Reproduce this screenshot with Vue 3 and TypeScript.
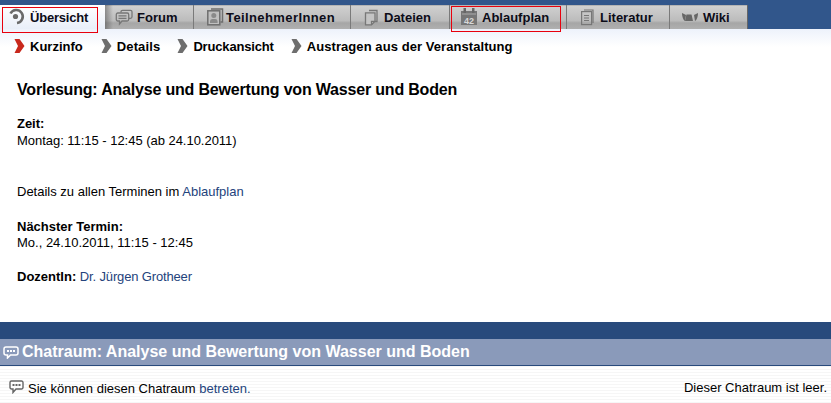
<script setup lang="ts">
interface Tab { label: string; icon: string; width: number; active?: boolean }
const tabs: Tab[] = [
  { label: 'Übersicht', icon: 'overview', width: 105, active: true },
  { label: 'Forum', icon: 'forum', width: 89 },
  { label: 'TeilnehmerInnen', icon: 'people', width: 157 },
  { label: 'Dateien', icon: 'files', width: 99 },
  { label: 'Ablaufplan', icon: 'plan', width: 117 },
  { label: 'Literatur', icon: 'lit', width: 103 },
  { label: 'Wiki', icon: 'wiki', width: 78 },
]
const subs = ['Kurzinfo', 'Details', 'Druckansicht', 'Austragen aus der Veranstaltung']
</script>

<template>
  <div class="page">
    <div class="topbar">
      <div class="tabs">
        <div v-for="t in tabs" :key="t.label" class="tab" :class="{ active: t.active }" :style="{ width: t.width + 'px' }">
          <svg class="ico" width="18" height="18" viewBox="0 0 18 18">
            <g v-if="t.icon === 'overview'">
              <path d="M2.500 5.500A6.500 6.500 0 1 1 9 15" fill="none" stroke="#6a6a6a" stroke-width="2.600" />
              <circle cx="7.500" cy="8.500" r="2.600" fill="#6a6a6a" />
            </g>
            <g v-else-if="t.icon === 'forum'" fill="none" stroke="#777" stroke-width="1.300">
              <path d="M6 4.500V3.800a1.500 1.500 0 0 1 1.500-1.500h8A1.500 1.500 0 0 1 17 3.800v5a1.500 1.500 0 0 1-1.500 1.500H14" />
              <path d="M2.800 5h9.400a1.500 1.500 0 0 1 1.500 1.500v5a1.500 1.500 0 0 1-1.500 1.500H7l-2.500 3v-3H2.800a1.500 1.500 0 0 1-1.500-1.500v-5A1.500 1.500 0 0 1 2.800 5z" />
              <path d="M3.500 7.800h8M3.500 10.300h8" />
            </g>
            <g v-else-if="t.icon === 'people'" fill="none" stroke="#6e6e6e" stroke-width="1.500">
              <path d="M7 1h11.500v13h-2" />
              <rect x="3.800" y="2.800" width="12" height="14" fill="#c0c0c0" />
              <circle cx="9.800" cy="7.500" r="2.500" fill="#8a8a8a" stroke="none" />
              <path d="M6 15v-2a2.500 2.500 0 0 1 2.500-2h2.600a2.500 2.500 0 0 1 2.500 2v2z" fill="#8a8a8a" stroke="none" />
            </g>
            <g v-else-if="t.icon === 'files'" fill="none" stroke="#777" stroke-width="1.300">
              <path d="M8 2.500h8v11h-2" />
              <path d="M4.500 4.800h9.500v8.500l-3.500 3.500H4.500z" fill="#c4c4c4" />
              <path d="M10.500 16.800v-3.500h3.500" />
            </g>
            <g v-else-if="t.icon === 'plan'">
              <rect x="1" y="3" width="16" height="14" fill="#767676" />
              <rect x="3.500" y="0" width="2.500" height="5" fill="#666" />
              <rect x="12" y="0" width="2.500" height="5" fill="#666" />
              <rect x="2" y="5.500" width="14" height="1" fill="#aaa" />
              <text x="9" y="15.500" text-anchor="middle" class="cal">42</text>
            </g>
            <g v-else-if="t.icon === 'lit'" fill="none" stroke="#777" stroke-width="1.200">
              <rect x="4.600" y="3.600" width="10" height="13" />
              <path d="M7 2h9v13" />
              <path d="M7 7.500h5M7 10h5M7 12.500h5" />
            </g>
            <g v-else fill="#666">
              <path d="M6.500 6.500h5L13 13H5z" />
              <path d="M2 5l4 2-1 6C3 12 2 8 2 5zM18 5l-4 2 1 6c2-1 3-5 3-8z" />
            </g>
          </svg>
          <span class="tab-label">{{ t.label }}</span>
        </div>
      </div>
    </div>
    <div class="mark mark-a"></div>
    <div class="mark mark-b"></div>

    <div class="subnav">
      <span v-for="(s, i) in subs" :key="s" class="sub">
        <svg width="11" height="14" viewBox="0 0 11 14"><path d="M0.500 0H5.500L10.500 7 5.500 14H0.500L4 7z" :fill="i === 0 ? '#c8281c' : '#6e6e6e'" /></svg>
        {{ s }}
      </span>
    </div>

    <main class="content">
      <h1>Vorlesung: Analyse und Bewertung von Wasser und Boden</h1>
      <p class="zeit"><b>Zeit:</b><br />Montag: 11:15 - 12:45 (ab 24.10.2011)</p>
      <p class="details">Details zu allen Terminen im <a>Ablaufplan</a></p>
      <p class="next"><b>Nächster Termin:</b><br />Mo., 24.10.2011, 11:15 - 12:45</p>
      <p class="doz"><b>DozentIn:</b> <a>Dr. Jürgen Grotheer</a></p>
    </main>

    <div class="band"></div>
    <div class="chat-head">
      <svg width="16" height="14" viewBox="0 0 16 14"><path d="M3 2h10a2 2 0 0 1 2 2v4a2 2 0 0 1-2 2H7.500L4.500 13v-3H3a2 2 0 0 1-2-2V4a2 2 0 0 1 2-2z" fill="none" stroke="#fff" stroke-width="1.500" /><path d="M4 6h8" stroke="#fff" stroke-width="2" stroke-dasharray="2 1" /></svg>
      <span>Chatraum: Analyse und Bewertung von Wasser und Boden</span>
    </div>
    <div class="chat-body">
      <div class="chat-left">
        <svg width="15" height="14" viewBox="0 0 15 14"><path d="M2.500 1h10A1.500 1.500 0 0 1 14 2.500v5A1.500 1.500 0 0 1 12.500 9H7l-3 3.500V9H2.500A1.500 1.500 0 0 1 1 7.500v-5A1.500 1.500 0 0 1 2.500 1z" fill="#fff" stroke="#666" stroke-width="1.400" /><path d="M3.500 5h8" stroke="#666" stroke-width="2" stroke-dasharray="2 1" /></svg>
        <span>Sie können diesen Chatraum <a>betreten.</a></span>
      </div>
      <span class="chat-right">Dieser Chatraum ist leer.</span>
    </div>
  </div>
</template>

<style>
html, body { margin: 0; background: #fff; }
</style>

<style scoped>
.page {
  position: relative;
  width: 831px;
  height: 403px;
  overflow: hidden;
  font-family: "Liberation Sans", Arial, sans-serif;
  font-size: 13px;
  color: #000;
  background: #fff;
}
.topbar {
  height: 29px;
  padding-top: 5px;
  box-sizing: border-box;
  background: #31568b;
}
.tabs { display: flex; height: 24px; width: 748px; }
.tab {
  flex: none;
  box-sizing: border-box;
  display: flex;
  align-items: center;
  gap: 4px;
  padding-left: 10px;
  font-size: 13px;
  font-weight: 700;
  background: linear-gradient(#b4b4b4 0 1px, #d0d0d0 1px, #bcbcbc 65%, #a6a6a6 75%, #b0b0b0);
  border-right: 1px solid #7a7a7a;
  color: #0c0c18;
}
.tab:nth-child(2) {
  background:
    linear-gradient(90deg, rgba(60, 60, 60, 0.45), rgba(60, 60, 60, 0) 8px),
    linear-gradient(#b4b4b4 0 1px, #d0d0d0 1px, #bcbcbc 65%, #a6a6a6 75%, #b0b0b0);
}
.tab:nth-child(3) .tab-label { letter-spacing: 0.4px; }
.tab:nth-child(4), .tab:nth-child(6), .tab:nth-child(7) { gap: 5px; }
.tab:last-child { border-right-color: #666; }
.tab.active {
  background: linear-gradient(#fff, #e9eff9);
  border-right: none;
  padding-left: 8px;
}
.tab.active .tab-label { letter-spacing: -0.2px; }
.tab-label { white-space: nowrap; }
.ico { flex: none; overflow: visible; margin-top: -1px; }
.cal { font: 700 9px "Liberation Sans", sans-serif; fill: #d8d8d8; }
.mark { position: absolute; border: 1px solid #e8000d; box-sizing: border-box; pointer-events: none; }
.mark-a { left: 2px; top: 7px; width: 96px; height: 26px; }
.mark-b { left: 451px; top: 6px; width: 110px; height: 26px; }
.subnav {
  display: flex;
  height: 34px;
  padding: 0 0 2px 14px;
  box-sizing: content-box;
  gap: 17px;
  align-items: center;
  font-size: 13px;
  font-weight: 700;
  background: linear-gradient(#edf2fb, #fff 50%);
}
.sub { display: flex; align-items: center; gap: 5px; }
.sub:first-child { margin-right: 1px; }
.sub:nth-child(2) { letter-spacing: 0.15px; }
.sub:nth-child(3) { letter-spacing: -0.17px; }
.sub:last-child { letter-spacing: 0.07px; }
.content { padding: 16px 17px 0; height: 257px; box-sizing: border-box; }
h1 { margin: 0; font-size: 16px; line-height: 18px; font-weight: 700; letter-spacing: -0.19px; }
p { margin: 0; font-size: 13px; line-height: 16px; }
a { color: #24437c; }
.zeit { margin-top: 16px; line-height: 17px; letter-spacing: -0.03px; }
.details { margin-top: 35px; }
.next { margin-top: 19px; }
.doz { margin-top: 18px; }
.doz a { letter-spacing: -0.15px; }
.band { height: 17px; background: #284a7c; }
.chat-head {
  height: 27px;
  box-sizing: border-box;
  padding-left: 3px;
  display: flex;
  align-items: center;
  gap: 3px;
  background: #8a9aba;
  border-bottom: 1px solid #284a7c;
  color: #fff;
  font-size: 16px;
  font-weight: 700;
}
.chat-body {
  display: flex;
  justify-content: space-between;
  padding: 14px 4px 0 9px;
  height: 37px;
  box-sizing: border-box;
  background: repeating-linear-gradient(#f6f6f6 0 1px, #fff 1px 3px);
}
.chat-left { display: flex; gap: 4px; align-items: flex-start; }
.chat-left span { margin-top: 1px; }
</style>
